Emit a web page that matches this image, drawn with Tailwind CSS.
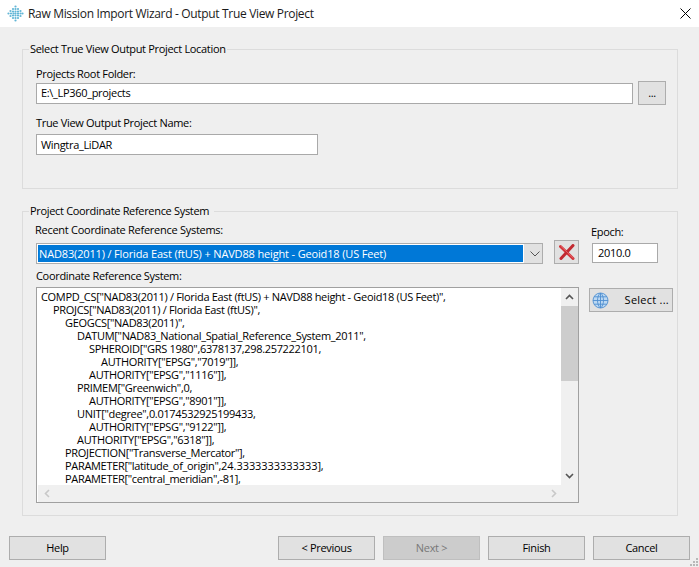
<!DOCTYPE html>
<html lang="en">
<head>
    <meta charset="UTF-8">
    <title>Raw Mission Import Wizard - Output True View Project</title>
    <script src="https://cdn.jsdelivr.net/npm/@tailwindcss/browser@4"></script>
</head>
<body class="w-[699px] h-[567px] overflow-hidden bg-[#efefef] text-black text-[11px] leading-[16px] font-['Open_Sans',sans-serif] tracking-[-0.32px]">
    <!-- title bar -->
    <div class="h-[27px] bg-white flex items-center pl-[7px] pr-[7px]">
        <svg class="w-[17px] h-[17px]" viewBox="0 0 17 17" fill="#62b6d6">
            <circle cx="8.5" cy="1.5" r="1.1"/><circle cx="6" cy="4" r="1.1"/><circle cx="8.5" cy="4" r="1.1"/><circle cx="11" cy="4" r="1.1"/>
            <circle cx="3.5" cy="6" r="1.1"/><circle cx="6" cy="6.5" r="1.1"/><circle cx="8.5" cy="6.5" r="1.1"/><circle cx="11" cy="6.5" r="1.1"/><circle cx="13.5" cy="6" r="1.1"/>
            <circle cx="1.5" cy="8.5" r="1.1"/><circle cx="4" cy="8.5" r="1.1"/><circle cx="6.5" cy="8.5" r="1.1"/><circle cx="8.5" cy="8.5" r="1.1"/><circle cx="11" cy="8.5" r="1.1"/><circle cx="13.5" cy="8.5" r="1.1"/><circle cx="15.5" cy="8.5" r="1.1"/>
            <circle cx="3.5" cy="11" r="1.1"/><circle cx="6" cy="10.5" r="1.1"/><circle cx="8.5" cy="10.5" r="1.1"/><circle cx="11" cy="10.5" r="1.1"/><circle cx="13.5" cy="11" r="1.1"/>
            <circle cx="6" cy="13" r="1.1"/><circle cx="8.5" cy="13" r="1.1"/><circle cx="11" cy="13" r="1.1"/><circle cx="8.5" cy="15.5" r="1.1"/>
        </svg>
        <span class="ml-[4px] text-[12px] tracking-[-0.33px] text-[#1a1a1a]">Raw Mission Import Wizard - Output True View Project</span>
        <svg class="ml-auto mr-[1px] w-[11px] h-[11px]" viewBox="0 0 11 11" stroke="#000" fill="none"><path d="M0.5 0.5L10.5 10.5M10.5 0.5L0.5 10.5"/></svg>
    </div>

    <div class="pl-[22px] pr-[21px]">
        <!-- output location group -->
        <div class="relative mt-[22px] h-[140px] border border-[#dcdcdc] pl-[13px] pt-[16px] pr-[11px]">
            <span class="absolute -top-[9px] left-[6px] bg-[#efefef] px-[1px]">Select True View Output Project Location</span>
            <div class="h-[15px]">Projects Root Folder:</div>
            <div class="flex items-center gap-[5px] h-[24px]">
                <div class="flex-1 h-[21px] bg-white border border-[#a9a9a9] pl-[4px] flex items-center">E:\_LP360_projects</div>
                <button class="w-[28px] h-[24px] bg-[#e1e1e1] border border-[#adadad]">...</button>
            </div>
            <div class="h-[15px] mt-[10px]">True View Output Project Name:</div>
            <div class="w-[282px] h-[21px] mt-[4px] bg-white border border-[#a9a9a9] pl-[4px] flex items-center">Wingtra_LiDAR</div>
        </div>

        <!-- crs group -->
        <div class="relative mt-[22px] h-[305px] border border-[#dcdcdc] pl-[13px] flex">
            <span class="absolute -top-[9px] left-[6px] bg-[#efefef] px-[1px] pr-[5px]">Project Coordinate Reference System</span>
            <div class="w-[543px] pt-[10px]">
                <div class="h-[16px] -ml-[1px] tracking-[-0.27px]">Recent Coordinate Reference Systems:</div>
                <div class="flex items-end justify-between h-[24px] mt-[2px]">
                    <div class="w-[507px] h-[21px] bg-[#e1e1e1] border border-[#adadad] flex items-center">
                        <div class="w-[487px] h-[19px] bg-white p-[1px]">
                            <div class="h-[17px] bg-[#0078d7] text-white pl-[1px] leading-[17px] tracking-[-0.15px]">NAD83(2011) / Florida East (ftUS) + NAVD88 height - Geoid18 (US Feet)</div>
                        </div>
                        <svg class="ml-[6px] w-[10px] h-[6px]" viewBox="0 0 10 6" fill="none" stroke="#555"><path d="M0.5 0.5L5 5L9.5 0.5"/></svg>
                    </div>
                    <button class="w-[25px] h-[24px] bg-[#e1e1e1] border border-[#adadad] flex items-center justify-center">
                        <svg class="w-[16px] h-[16px]" viewBox="0 0 16 16" fill="none" stroke-linecap="round">
                            <path d="M1.5 2.5L14 14.5" stroke="#d2343a" stroke-width="3"/>
                            <path d="M14 1.5L2 14.5" stroke="#c22a31" stroke-width="3"/>
                            <path d="M2 2.2L14 13.8" stroke="#ee7478" stroke-width="0.7"/>
                        </svg>
                    </button>
                </div>
                <div class="h-[16px] mt-[4px]">Coordinate Reference System:</div>
                <!-- wkt box -->
                <div class="mt-[3px] h-[216px] bg-white border border-[#a0a0a0] flex flex-col overflow-hidden">
                    <div class="flex flex-1 min-h-0">
                        <div class="flex-1 min-w-0 overflow-hidden pl-[4px] pt-[2px] leading-[13px] whitespace-nowrap">
                            <div>COMPD_CS["NAD83(2011) / Florida East (ftUS) + NAVD88 height - Geoid18 (US Feet)",</div>
                            <div class="pl-[12px]">PROJCS["NAD83(2011) / Florida East (ftUS)",</div>
                            <div class="pl-[24px]">GEOGCS["NAD83(2011)",</div>
                            <div class="pl-[36px]">DATUM["NAD83_National_Spatial_Reference_System_2011",</div>
                            <div class="pl-[48px]">SPHEROID["GRS 1980",6378137,298.257222101,</div>
                            <div class="pl-[60px]">AUTHORITY["EPSG","7019"]],</div>
                            <div class="pl-[48px]">AUTHORITY["EPSG","1116"]],</div>
                            <div class="pl-[36px]">PRIMEM["Greenwich",0,</div>
                            <div class="pl-[48px]">AUTHORITY["EPSG","8901"]],</div>
                            <div class="pl-[36px]">UNIT["degree",0.0174532925199433,</div>
                            <div class="pl-[48px]">AUTHORITY["EPSG","9122"]],</div>
                            <div class="pl-[36px]">AUTHORITY["EPSG","6318"]],</div>
                            <div class="pl-[24px]">PROJECTION["Transverse_Mercator"],</div>
                            <div class="pl-[24px]">PARAMETER["latitude_of_origin",<span class="tracking-[-0.05px]">24.3333333333333</span>],</div>
                            <div class="pl-[24px]">PARAMETER["central_meridian",-81],</div>
                        </div>
                        <div class="w-[17px] bg-[#f0f0f0] flex flex-col items-center">
                            <svg class="mt-[6px] w-[9px] h-[6px]" viewBox="0 0 9 6" fill="none" stroke="#555" stroke-width="1.6"><path d="M1 5L4.5 1.5L8 5"/></svg>
                            <div class="w-full h-[75px] mt-[6px] bg-[#cdcdcd]"></div>
                            <svg class="mt-auto mb-[6px] w-[9px] h-[6px]" viewBox="0 0 9 6" fill="none" stroke="#555" stroke-width="1.6"><path d="M1 1L4.5 4.5L8 1"/></svg>
                        </div>
                    </div>
                    <div class="h-[17px] ml-[1px] bg-[#f0f0f0] flex items-center justify-between pl-[6px] pr-[21px]">
                        <svg class="w-[6px] h-[9px]" viewBox="0 0 6 9" fill="none" stroke="#c8c8c8" stroke-width="1.6"><path d="M5 1L1.5 4.5L5 8"/></svg>
                        <svg class="w-[6px] h-[9px]" viewBox="0 0 6 9" fill="none" stroke="#c8c8c8" stroke-width="1.6"><path d="M1 1L4.5 4.5L1 8"/></svg>
                    </div>
                </div>
            </div>
            <div class="w-[84px] ml-[10px] pt-[12px]">
                <div class="h-[16px] pl-[2px]">Epoch:</div>
                <div class="w-[66px] h-[20px] mt-[3px] ml-[3px] bg-white border border-[#a9a9a9] pl-[5px] flex items-center">2010.0</div>
                <button class="w-[84px] h-[24px] mt-[25px] bg-[#e1e1e1] border border-[#adadad] flex items-center pl-[2px] pr-[3px]">
                    <svg class="w-[17px] h-[17px]" viewBox="0 0 17 17" fill="#bcd8f2" stroke="#4f8fd0" stroke-width="0.9">
                        <circle cx="8.5" cy="8.5" r="7.5"/>
                        <path fill="none" d="M8.5 1V16M1 8.5H16M2 4.8H15M2 12.2H15M8.5 1C4.5 4 4.5 13 8.5 16M8.5 1C12.5 4 12.5 13 8.5 16"/>
                    </svg>
                    <span class="ml-auto tracking-[0.25px]">Select ...</span>
                </button>
            </div>
        </div>
    </div>

    <!-- wizard buttons -->
    <div class="flex gap-[8px] mt-[20px] px-[9px]">
        <button class="w-[97px] h-[24px] bg-[#e1e1e1] border border-[#adadad]">Help</button>
        <button class="w-[97px] h-[24px] ml-auto bg-[#e1e1e1] border border-[#adadad]">&lt; Previous</button>
        <button class="w-[97px] h-[24px] bg-[#cccccc] border border-[#bfbfbf] text-[#787878]">Next &gt;</button>
        <button class="w-[97px] h-[24px] bg-[#e1e1e1] border border-[#adadad]">Finish</button>
        <button class="w-[97px] h-[24px] bg-[#e1e1e1] border border-[#adadad]">Cancel</button>
    </div>
    <svg class="absolute right-0 bottom-0 w-[9px] h-[9px]" viewBox="0 0 9 9" fill="#b8b8b8">
        <rect x="6" y="0" width="2" height="2"/><rect x="3" y="3" width="2" height="2"/><rect x="6" y="3" width="2" height="2"/><rect x="0" y="6" width="2" height="2"/><rect x="3" y="6" width="2" height="2"/><rect x="6" y="6" width="2" height="2"/>
    </svg>
</body>
</html>
